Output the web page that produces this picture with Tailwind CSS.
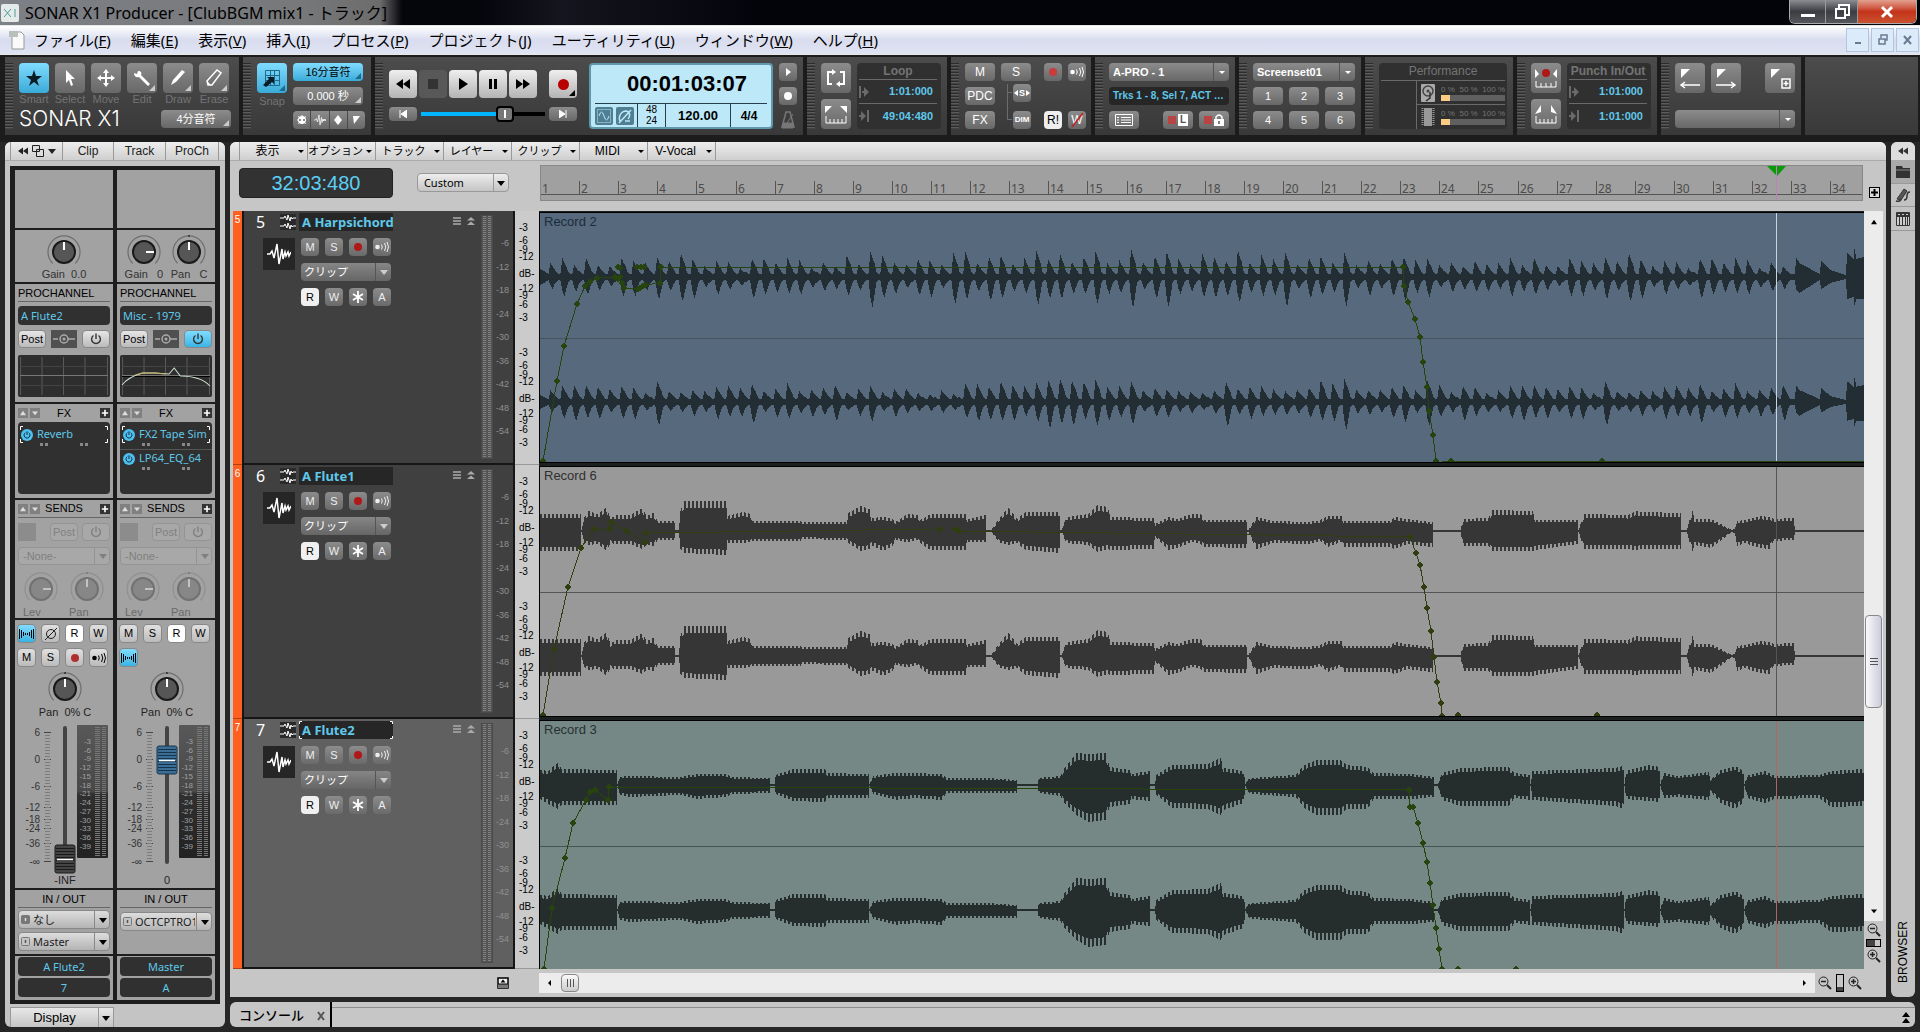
<!DOCTYPE html>
<html lang="ja">
<head>
    <meta charset="UTF-8">
    <meta name="viewport" content="width=device-width, initial-scale=1.0">
    <title>SONAR X1 Producer - [ClubBGM mix1 - トラック]</title>
    <script src="https://cdn.jsdelivr.net/npm/@tailwindcss/browser@4"></script>
</head>
<body class="min-h-screen flex flex-col bg-[#262626] text-black text-xs font-['Liberation_Sans','Noto_Sans_CJK_JP',sans-serif]">

    <!-- shared icons -->
    <svg class="hidden">
        <symbol id="i-down" viewBox="0 0 8 8"><path d="M0 2h8L4 7z" fill="currentColor"/></symbol>
        <symbol id="i-small" viewBox="0 0 8 8"><path d="M1 3h6L4 6z" fill="currentColor"/></symbol>
        <symbol id="i-up" viewBox="0 0 8 8"><path d="M0 7h8L4 1z" fill="currentColor"/></symbol>
        <symbol id="i-corner" viewBox="0 0 6 6"><path d="M6 0v6H0z" fill="currentColor"/></symbol>
        <symbol id="i-plus" viewBox="0 0 10 10"><path d="M4 1h2v3h3v2H6v3H4V6H1V4h3z" fill="currentColor"/></symbol>
        <symbol id="i-power" viewBox="0 0 12 12"><path d="M3.5 2.5a4.4 4.4 0 1 0 5 0M6 .5v5.5" fill="none" stroke="currentColor" stroke-width="1.4"/></symbol>
        <symbol id="i-echo" viewBox="0 0 16 12"><circle cx="3.5" cy="6" r="2.3" fill="currentColor"/><path d="M7.500 3.500q1.500 2.500 0 5M10.500 2q2.500 4 0 8M13 1q3 5 0 10" fill="none" stroke="currentColor"/></symbol>
        <symbol id="i-link" viewBox="0 0 15 10"><path d="M.500 0v10M2.500 1v8M4.500 3v4M6.500 4v2M8.500 4v2M10.500 3v4M12.500 1v8M14.500 0v10" stroke="currentColor" stroke-width="1" shape-rendering="crispEdges"/></symbol>
        <symbol id="i-wave" viewBox="0 0 24 22"><path d="M0 11h3l2-3 2 7 3-14 2 20 3-15 1 10 2-7 1 4 2-4 1 4 2-4" fill="none" stroke="currentColor" stroke-width="1.500"/></symbol>
        <symbol id="i-dbl" viewBox="0 0 16 16"><path d="M0 4h4l1-2 2 4 1-5 2 6 1-4 1 2 1-1h3M0 12h4l1-2 2 4 1-5 2 6 1-4 1 2 1-1h3" fill="none" stroke="currentColor"/></symbol>
        <symbol id="i-rew" viewBox="0 0 14 10"><path d="M7 0v10L0 5zM14 0v10L7 5z" fill="currentColor"/></symbol>
        <symbol id="i-ffw" viewBox="0 0 14 10"><path d="M0 0v10l7-5zM7 0v10l7-5z" fill="currentColor"/></symbol>
        <symbol id="i-from" viewBox="0 0 10 12"><path d="M1 0v12" stroke="currentColor" stroke-width="2"/><path d="M3 5h2V1l5 5-5 5V7H3z" fill="currentColor"/></symbol>
        <symbol id="i-to" viewBox="0 0 10 12"><path d="M9 0v12" stroke="currentColor" stroke-width="2"/><path d="M0 5h2V1l5 5-5 5V7H0z" fill="currentColor"/></symbol>
        <symbol id="i-range" viewBox="0 0 22 22"><path d="M0 3h7L0 10zM22 3h-7l7 7z" fill="currentColor"/><path d="M1 13v7h20v-7M5 16v4M9 16v4M13 16v4M17 16v4" fill="none" stroke="currentColor" stroke-width="1"/></symbol>
        <symbol id="i-zoomout" viewBox="0 0 14 14"><circle cx="5.500" cy="5.500" r="4.500" fill="none" stroke="currentColor"/><path d="M3 5.500h5" stroke="currentColor" stroke-width="1.500"/><path d="M9 9l4 4" stroke="currentColor" stroke-width="2"/></symbol>
        <symbol id="i-zoomin" viewBox="0 0 14 14"><circle cx="5.500" cy="5.500" r="4.500" fill="none" stroke="currentColor"/><path d="M3 5.500h5M5.500 3v5" stroke="currentColor" stroke-width="1.500"/><path d="M9 9l4 4" stroke="currentColor" stroke-width="2"/></symbol>
        <symbol id="i-metro" viewBox="0 0 16 18"><path d="M6 1h4l4 15H2z" fill="none" stroke="currentColor" stroke-width="1.500"/><path d="M3 12h10v5H2zM7 12l6-9" fill="currentColor" stroke="currentColor"/></symbol>
    </svg>

    <!-- title bar -->
    <header class="h-[25px] flex items-center bg-[linear-gradient(to_right,#7d8086,#77787a_300px,#6c6c6c_380px,#05050c_402px,#05050c_480px,#15151f_560px,#03030a_760px)]">
        <svg class="w-[18px] h-[18px] ml-px" viewBox="0 0 18 18"><rect width="18" height="18" rx="2" fill="#e4eaea"/><path d="M3 5l7 8M3 13l7-8M14 5v8" stroke="#4e9c94" fill="none"/></svg>
        <h1 class="ml-1.5 text-base leading-none font-['Noto_Sans','Noto_Sans_CJK_JP',sans-serif] whitespace-nowrap">SONAR X1 Producer - [ClubBGM mix1 - トラック]</h1>
        <div class="ml-auto mr-[3px] flex self-start h-6 border border-t-0 border-[#aaa] rounded-b-md overflow-hidden">
            <button class="w-9 flex items-center justify-center bg-linear-to-b from-[#8b8d92] via-[#3b3d42] to-[#55575c] border-r border-[#999]" aria-label="Minimize"><svg class="w-4 h-4" viewBox="0 0 16 16"><path d="M1 10h14v3H1z" fill="#fff"/></svg></button>
            <button class="w-8 flex items-center justify-center bg-linear-to-b from-[#8b8d92] via-[#3b3d42] to-[#55575c] border-r border-[#999]" aria-label="Restore"><svg class="w-4 h-4" viewBox="0 0 16 16"><path d="M5 4V1h10v10h-3M2 5h9v9H2z" fill="none" stroke="#fff" stroke-width="2"/></svg></button>
            <button class="w-[58px] flex items-center justify-center bg-linear-to-b from-[#e2a090] via-[#c4331a] to-[#c9502e]" aria-label="Close"><svg class="w-4 h-4" viewBox="0 0 16 16"><path d="M3 3l10 10M13 3L3 13" stroke="#fff" stroke-width="3"/></svg></button>
        </div>
    </header>

    <!-- menu bar -->
    <nav class="h-[30px] flex items-center gap-5 pl-[9px] pr-px border-y border-[#e8e8e8] bg-linear-to-b from-white via-[#d8dcee] to-[#dfe4f3] text-[15px] leading-5 font-['Noto_Sans','Noto_Sans_CJK_JP',sans-serif] whitespace-nowrap">
        <svg class="w-4 h-5 -mr-[11px]" viewBox="0 0 16 20"><path d="M3 2h9l3 3v14H3z" fill="#fafafa" stroke="#999"/><path d="M0 1h9v6H0z" fill="#b8c0bc"/></svg>
        <a href="#">ファイル(<u>F</u>)</a>
        <a href="#">編集(<u>E</u>)</a>
        <a href="#">表示(<u>V</u>)</a>
        <a href="#">挿入(<u>I</u>)</a>
        <a href="#">プロセス(<u>P</u>)</a>
        <a href="#">プロジェクト(<u>J</u>)</a>
        <a href="#">ユーティリティ(<u>U</u>)</a>
        <a href="#">ウィンドウ(<u>W</u>)</a>
        <a href="#">ヘルプ(<u>H</u>)</a>
        <div class="ml-auto flex gap-0.5 text-[#6a7a90]">
            <button class="w-[23px] h-6 bg-[#dcebfa] border border-[#b4c4dc] flex items-center justify-center" aria-label="Minimize document"><svg class="w-3 h-3" viewBox="0 0 12 12"><path d="M3 9h6" stroke="currentColor" stroke-width="2"/></svg></button>
            <button class="w-[23px] h-6 bg-[#dcebfa] border border-[#b4c4dc] flex items-center justify-center" aria-label="Restore document"><svg class="w-3 h-3" viewBox="0 0 12 12"><path d="M4 4V1h6v5H8M2 5h6v5H2z" fill="none" stroke="currentColor" stroke-width="1.500"/></svg></button>
            <button class="w-[23px] h-6 bg-[#dcebfa] border border-[#b4c4dc] flex items-center justify-center" aria-label="Close document"><svg class="w-3 h-3" viewBox="0 0 12 12"><path d="M2 2l7 8M9 2l-7 8" stroke="currentColor" stroke-width="2"/></svg></button>
        </div>
    </nav>

    <!-- control bar -->
    <section class="flex gap-1 pl-[5px] pr-0.5 pt-0.5 pb-[7px] bg-[#1c1c1c] text-white">
        <!-- tools -->
        <div class="w-[234px] h-[78px] flex gap-1.5 py-1.5 bg-linear-to-b from-[#4c4c4c] to-[#393939]">
            <div class="w-2 bg-[repeating-linear-gradient(#2c2c2c_0_1px,#5a5a5a_1px_2px,#444_2px_3px)]"></div>
            <div class="flex flex-col gap-1 grow">
                <div class="flex gap-1.5 text-[#747474] text-[11px] leading-[13px] text-center">
                    <div class="w-[30px] flex flex-col items-center"><button class="relative w-[30px] h-[30px] rounded-sm bg-linear-to-b from-[#7fdcff] to-[#38abd8] flex items-center justify-center" aria-label="Smart"><svg class="w-5 h-5" viewBox="0 0 20 20"><path d="M10 2l2 6h6l-5 4 2 6-5-4-5 4 2-6-5-4h6z" fill="#0c1c24"/></svg></button><span>Smart</span></div>
                    <div class="w-[30px] flex flex-col items-center"><button class="relative w-[30px] h-[30px] rounded-sm bg-linear-to-b from-[#8c8c8c] to-[#686868] flex items-center justify-center" aria-label="Select"><svg class="w-5 h-5" viewBox="0 0 20 20"><path d="M6 2v13l3-3 2 6 2-1-2-6h4z" fill="#fff"/></svg></button><span>Select</span></div>
                    <div class="w-[30px] flex flex-col items-center"><button class="relative w-[30px] h-[30px] rounded-sm bg-linear-to-b from-[#8c8c8c] to-[#686868] flex items-center justify-center" aria-label="Move"><svg class="w-5 h-5" viewBox="0 0 20 20"><path d="M10 1l3 4h-2v4h4V7l4 3-4 3v-2h-4v4h2l-3 4-3-4h2v-4H5v2l-4-3 4-3v2h4V5H7z" fill="#fff"/></svg></button><span>Move</span></div>
                    <div class="w-[30px] flex flex-col items-center"><button class="relative w-[30px] h-[30px] rounded-sm bg-linear-to-b from-[#8c8c8c] to-[#686868] flex items-center justify-center" aria-label="Edit"><svg class="w-5 h-5" viewBox="0 0 20 20"><path d="M2 5l3 1 1-3c3 0 4 2 3 4l9 9-2 2-9-9c-2 1-5 0-5-4z" fill="#fff"/></svg><svg class="absolute right-0.5 bottom-0.5 w-1.5 h-1.5 text-[#ccc]"><use href="#i-corner"/></svg></button><span>Edit</span></div>
                    <div class="w-[30px] flex flex-col items-center"><button class="relative w-[30px] h-[30px] rounded-sm bg-linear-to-b from-[#8c8c8c] to-[#686868] flex items-center justify-center" aria-label="Draw"><svg class="w-5 h-5" viewBox="0 0 20 20"><path d="M3 17l2-5L14 2l3 2L8 14z" fill="#fff"/></svg><svg class="absolute right-0.5 bottom-0.5 w-1.5 h-1.5 text-[#ccc]"><use href="#i-corner"/></svg></button><span>Draw</span></div>
                    <div class="w-[30px] flex flex-col items-center"><button class="relative w-[30px] h-[30px] rounded-sm bg-linear-to-b from-[#8c8c8c] to-[#686868] flex items-center justify-center" aria-label="Erase"><svg class="w-5 h-5" viewBox="0 0 20 20"><path d="M3 13L13 2l4 3L8 17H4z" fill="none" stroke="#fff" stroke-width="1.500"/><path d="M3 13l4 4H4z" fill="#fff"/></svg><svg class="absolute right-0.5 bottom-0.5 w-1.5 h-1.5 text-[#ccc]"><use href="#i-corner"/></svg></button><span>Erase</span></div>
                </div>
                <div class="flex items-center justify-between pr-2">
                    <b class="font-['Inter',sans-serif] font-light text-[21px] leading-[18px] whitespace-nowrap">SONAR X1</b>
                    <button class="relative w-[70px] h-[18px] rounded-sm bg-linear-to-b from-[#8c8c8c] to-[#686868] text-[11px] leading-none">4分音符<svg class="absolute right-0.5 bottom-0.5 w-1.5 h-1.5 text-[#ccc]"><use href="#i-corner"/></svg></button>
                </div>
            </div>
        </div>

        <!-- snap -->
        <div class="w-[128px] h-[78px] flex gap-1.5 py-1.5 bg-linear-to-b from-[#4c4c4c] to-[#393939]">
            <div class="w-2 bg-[repeating-linear-gradient(#2c2c2c_0_1px,#5a5a5a_1px_2px,#444_2px_3px)]"></div>
            <div class="w-[30px] text-[#747474] text-[11px] leading-4 text-center">
                <button class="relative w-[30px] h-[30px] rounded-sm bg-linear-to-b from-[#7fdcff] to-[#38abd8] flex items-center justify-center" aria-label="Snap"><svg class="w-5 h-5" viewBox="0 0 20 20"><path d="M3.500 2.500h14v15h-14zM3.500 7.500h14M3.500 12.500h14M8.500 2v16M12.500 2v16" fill="none" stroke="#1e6a88"/><path d="M1 17l6-6-2-2h7v7l-2-2-6 5z" fill="#0c1c24"/></svg><svg class="absolute right-0.5 bottom-0.5 w-1.5 h-1.5 text-[#1e6a88]"><use href="#i-corner"/></svg></button>
                <span>Snap</span>
            </div>
            <div class="flex flex-col justify-between w-[72px]">
                <button class="relative w-[70px] h-[18px] rounded-sm bg-linear-to-b from-[#7fdcff] to-[#38abd8] text-black text-[11px] leading-none">16分音符<svg class="absolute right-0.5 bottom-0.5 w-1.5 h-1.5 text-[#1e6a88]"><use href="#i-corner"/></svg></button>
                <button class="relative w-[70px] h-[18px] rounded-sm bg-linear-to-b from-[#8c8c8c] to-[#686868] text-[11px] leading-none">0.000 秒<svg class="absolute right-0.5 bottom-0.5 w-1.5 h-1.5 text-[#ccc]"><use href="#i-corner"/></svg></button>
                <div class="flex h-[18px] rounded-sm divide-x divide-[#4a4a4a] bg-linear-to-b from-[#8c8c8c] to-[#686868]">
                    <button class="flex-1 flex items-center justify-center" aria-label="MIDI events"><svg class="w-3 h-3" viewBox="0 0 12 12"><circle cx="6" cy="6" r="4" fill="#fff"/><path d="M6 1v10M1 6h10M2 2l8 8M10 2l-8 8" stroke="#fff" stroke-dasharray="1 1"/><circle cx="4" cy="6" r="1" fill="#666"/><circle cx="8" cy="6" r="1" fill="#666"/></svg></button>
                    <button class="flex-1 flex items-center justify-center" aria-label="Audio transients"><svg class="w-3 h-3"><use href="#i-wave"/></svg></button>
                    <button class="flex-1 flex items-center justify-center" aria-label="Nodes"><svg class="w-3 h-3" viewBox="0 0 12 12"><path d="M6 1l4 5-4 5-4-5z" fill="#fff"/></svg></button>
                    <button class="flex-1 flex items-center justify-center" aria-label="Markers"><svg class="w-3 h-3" viewBox="0 0 12 12"><path d="M3 2h7l-6 8z" fill="#fff"/></svg></button>
                </div>
            </div>
        </div>

        <!-- transport -->
        <div class="w-[428px] h-[78px] flex gap-1.5 py-1.5 bg-linear-to-b from-[#4c4c4c] to-[#393939]">
            <div class="w-2 bg-[repeating-linear-gradient(#2c2c2c_0_1px,#5a5a5a_1px_2px,#444_2px_3px)]"></div>
            <div class="w-[188px] pt-[7px] flex flex-col gap-2 text-black">
                <div class="flex gap-0.5">
                    <button class="w-7 h-7 rounded-sm bg-linear-to-b from-[#efefef] to-[#b4b4b4] flex items-center justify-center" aria-label="Rewind"><svg class="w-3.5 h-2.5"><use href="#i-rew"/></svg></button>
                    <button class="w-7 h-7 rounded-sm bg-[#585858] flex items-center justify-center" aria-label="Stop"><span class="w-2.5 h-2.5 bg-[#333]"></span></button>
                    <button class="w-7 h-7 rounded-sm bg-linear-to-b from-[#efefef] to-[#b4b4b4] flex items-center justify-center" aria-label="Play"><svg class="w-3 h-3" viewBox="0 0 12 12"><path d="M2 0l9 6-9 6z"/></svg></button>
                    <button class="w-7 h-7 rounded-sm bg-linear-to-b from-[#efefef] to-[#b4b4b4] flex items-center justify-center gap-0.5" aria-label="Pause"><span class="w-[3px] h-2.5 bg-black"></span><span class="w-[3px] h-2.5 bg-black"></span></button>
                    <button class="w-7 h-7 rounded-sm bg-linear-to-b from-[#efefef] to-[#b4b4b4] flex items-center justify-center" aria-label="Fast forward"><svg class="w-3.5 h-2.5"><use href="#i-ffw"/></svg></button>
                    <button class="relative ml-auto w-7 h-7 rounded-sm bg-linear-to-b from-[#efefef] to-[#b4b4b4] flex items-center justify-center" aria-label="Record"><span class="w-[11px] h-[11px] rounded-full bg-[#b80000]"></span><svg class="absolute right-0.5 bottom-0.5 w-1.5 h-1.5"><use href="#i-corner"/></svg></button>
                </div>
                <div class="flex items-center justify-between">
                    <button class="w-7 h-3.5 rounded-sm bg-linear-to-b from-[#8c8c8c] to-[#686868] text-white flex items-center justify-center" aria-label="Go to start"><svg class="w-2 h-2" viewBox="0 0 8 8"><path d="M1 0v8M8 0v8L2 4z" fill="#fff" stroke="#fff"/></svg></button>
                    <div class="relative w-[124px] h-4 flex items-center">
                        <span class="w-[75px] h-1 bg-[#00b4ff]"></span><span class="w-[18px] h-4 rounded-sm border-2 border-black bg-[#777] flex items-center justify-center"><span class="w-0.5 h-2 bg-white"></span></span><span class="grow h-1 bg-black"></span>
                        <input type="range" value="68" aria-label="Now time" class="absolute inset-0 w-full h-full opacity-0">
                    </div>
                    <button class="w-7 h-3.5 rounded-sm bg-linear-to-b from-[#8c8c8c] to-[#686868] text-white flex items-center justify-center" aria-label="Go to end"><svg class="w-2 h-2" viewBox="0 0 8 8"><path d="M7 0v8M0 0v8l6-4z" fill="#fff" stroke="#fff"/></svg></button>
                </div>
            </div>
            <div class="ml-1.5 w-[184px] h-[66px] rounded border-2 border-[#5f98ad] bg-[#bce8f8] text-black flex flex-col">
                <div class="grow flex items-center justify-center pl-3 text-[22px] font-bold leading-none">00:01:03:07</div>
                <div class="h-6 mx-1 flex items-stretch border-t border-[#25404c]">
                    <div class="w-[42px] flex items-center gap-[3px]">
                        <svg class="w-[18px] h-[18px]" viewBox="0 0 18 18"><rect width="18" height="18" rx="2" fill="#4f7f92"/><rect x="2.500" y="2.500" width="13" height="13" fill="none" stroke="#bce8f8" stroke-dasharray="1 1"/><path d="M4 9q2.500-8 5 0t5 0" fill="none" stroke="#bce8f8"/></svg>
                        <svg class="w-[18px] h-[18px]" viewBox="0 0 18 18"><rect width="18" height="18" rx="2" fill="#4f7f92"/><path d="M4 14c-2-4 1-10 6-10 5 1 4 6 2 8M3 16L15 3M9 14h5" fill="none" stroke="#bce8f8" stroke-width="1.500"/></svg>
                    </div>
                    <div class="w-[29px] border-x border-[#25404c] text-[10px] leading-[11px] text-center">48<br>24</div>
                    <div class="w-16 flex items-center justify-center font-bold text-[13px]">120.00</div>
                    <div class="grow border-l border-[#25404c] flex items-center justify-center font-bold text-xs">4/4</div>
                </div>
            </div>
            <div class="w-[18px] flex flex-col justify-between">
                <button class="w-[18px] h-[18px] rounded-sm bg-linear-to-b from-[#8c8c8c] to-[#686868] flex items-center justify-center" aria-label="Metronome on play"><svg class="w-2 h-2" viewBox="0 0 8 8"><path d="M2 0l5 4-5 4z" fill="#fff"/></svg></button>
                <button class="w-[18px] h-[18px] rounded-sm bg-linear-to-b from-[#8c8c8c] to-[#686868] flex items-center justify-center" aria-label="Metronome on record"><span class="w-2 h-2 rounded-full bg-white"></span></button>
                <svg class="w-[18px] h-[18px] text-[#777]"><use href="#i-metro"/></svg>
            </div>
        </div>

        <!-- loop -->
        <div class="w-[140px] h-[78px] flex gap-1.5 py-1.5 bg-linear-to-b from-[#4c4c4c] to-[#393939]">
            <div class="w-2 bg-[repeating-linear-gradient(#2c2c2c_0_1px,#5a5a5a_1px_2px,#444_2px_3px)]"></div>
            <div class="flex flex-col justify-between">
                <button class="w-[30px] h-[30px] rounded-sm bg-linear-to-b from-[#8c8c8c] to-[#686868] flex items-center justify-center" aria-label="Loop on/off"><svg class="w-5 h-5" viewBox="0 0 20 20"><path d="M7 4H2v12h4M13 16h5V4h-4" fill="none" stroke="#fff" stroke-width="2"/><path d="M6 1l4 3-4 3zM14 19l-4-3 4-3z" fill="#fff"/></svg></button>
                <button class="w-[30px] h-[30px] rounded-sm bg-linear-to-b from-[#8c8c8c] to-[#686868] flex items-center justify-center" aria-label="Set loop to selection"><svg class="w-[22px] h-[22px]"><use href="#i-range"/></svg></button>
            </div>
            <div class="w-[84px] rounded bg-[#303030] px-0.5 pr-1 divide-y divide-[#6a6a6a] text-[#5fc8ea] text-[11px] font-bold">
                <div class="h-[17px] text-[#747474] text-xs leading-[17px] text-center">Loop</div>
                <div class="h-6 flex items-center justify-between"><svg class="w-2.5 h-3 text-[#6a6a6a]"><use href="#i-from"/></svg><span class="pr-1">1:01:000</span></div>
                <div class="h-6 flex items-center justify-between"><svg class="w-2.5 h-3 text-[#6a6a6a]"><use href="#i-to"/></svg><span class="pr-1">49:04:480</span></div>
            </div>
        </div>

        <!-- mix -->
        <div class="w-[140px] h-[78px] flex gap-1.5 py-1.5 bg-linear-to-b from-[#4c4c4c] to-[#393939]">
            <div class="w-2 bg-[repeating-linear-gradient(#2c2c2c_0_1px,#5a5a5a_1px_2px,#444_2px_3px)]"></div>
            <div class="flex flex-col justify-between w-[30px]">
                <button class="h-[18px] rounded-sm bg-linear-to-b from-[#8c8c8c] to-[#686868] leading-none">M</button>
                <button class="h-[18px] rounded-sm bg-linear-to-b from-[#8c8c8c] to-[#686868] leading-none">PDC</button>
                <button class="h-[18px] rounded-sm bg-linear-to-b from-[#8c8c8c] to-[#686868] leading-none">FX</button>
            </div>
            <div class="grid grid-cols-[12px_18px] content-between w-[30px]">
                <button class="col-span-2 h-[18px] rounded-sm bg-linear-to-b from-[#8c8c8c] to-[#686868] leading-none">S</button>
                <svg class="row-span-2 w-3 h-[42px]" viewBox="0 0 12 42"><path d="M6.500 0v35.500H11M6.500 8.500H11" fill="none" stroke="#6c6c6c"/></svg>
                <button class="w-[18px] h-[18px] rounded-sm bg-linear-to-b from-[#8c8c8c] to-[#686868] text-[9px] font-bold leading-none flex items-center justify-center gap-px" aria-label="Exclusive solo"><svg class="w-1 h-1.5" viewBox="0 0 4 6"><path d="M4 0v6L0 3z" fill="#fff"/></svg>S<svg class="w-1 h-1.5" viewBox="0 0 4 6"><path d="M0 0v6l4-3z" fill="#fff"/></svg></button>
                <button class="mt-1.5 w-[18px] h-[18px] rounded-sm bg-linear-to-b from-[#8c8c8c] to-[#686868] text-[8px] font-bold leading-none flex items-center justify-center">DIM</button>
            </div>
            <div class="ml-[7px] grid grid-cols-2 content-between gap-x-[6px] w-[42px]">
                <button class="w-[18px] h-[18px] rounded-sm bg-linear-to-b from-[#8c8c8c] to-[#686868] flex items-center justify-center" aria-label="Record arm"><span class="w-2 h-2 rounded-full bg-[#c83c3c]"></span></button>
                <button class="w-[18px] h-[18px] rounded-sm bg-linear-to-b from-[#8c8c8c] to-[#686868] flex items-center justify-center" aria-label="Input echo"><svg class="w-4 h-3"><use href="#i-echo"/></svg></button>
                <button class="w-[18px] h-[18px] rounded-sm bg-[#eee] text-black leading-none">R!</button>
                <button class="w-[18px] h-[18px] rounded-sm bg-linear-to-b from-[#8c8c8c] to-[#686868] leading-none relative">W<svg class="absolute inset-0 w-full h-full" viewBox="0 0 18 18"><path d="M4 16L15 2" stroke="#c02020" stroke-width="1.500"/></svg></button>
            </div>
        </div>

        <!-- controller -->
        <div class="w-[140px] h-[78px] flex gap-1.5 py-1.5 bg-linear-to-b from-[#4c4c4c] to-[#393939]">
            <div class="w-2 bg-[repeating-linear-gradient(#2c2c2c_0_1px,#5a5a5a_1px_2px,#444_2px_3px)]"></div>
            <div class="w-[120px] flex flex-col justify-between">
                <div class="relative"><select aria-label="Controller" class="appearance-none block w-full h-[18px] pl-1 rounded-sm bg-linear-to-b from-[#8c8c8c] to-[#686868] text-[11px] font-bold leading-none"><option>A-PRO - 1</option></select><span class="absolute right-0 top-0 w-4 h-[18px] border-l border-[#555] flex items-center justify-center pointer-events-none"><svg class="w-2 h-2"><use href="#i-small"/></svg></span></div>
                <div class="h-[18px] rounded-sm bg-[#262626] pl-1 text-[#5fc8ea] text-[10px] font-bold leading-[18px] whitespace-nowrap overflow-hidden">Trks 1 - 8, Sel 7, ACT …</div>
                <div class="flex">
                    <button class="w-[30px] h-[18px] rounded-sm bg-linear-to-b from-[#8c8c8c] to-[#686868] flex items-center justify-center" aria-label="Open controller"><svg class="w-[18px] h-3" viewBox="0 0 18 12"><path d="M.500.500h17v11H.500z" fill="none" stroke="#fff"/><path d="M2 3.500h2M6 3.500h10M2 6h2M6 6h10M2 8.500h2M6 8.500h10" stroke="#fff"/></svg></button>
                    <button class="ml-auto w-[30px] h-[18px] rounded-sm bg-linear-to-b from-[#8c8c8c] to-[#686868] flex items-center justify-center gap-0.5" aria-label="Learn"><span class="w-2 h-2 bg-[#b84444]"></span><span class="w-2.5 h-3 bg-white text-[#555] font-bold text-[10px] leading-3">L</span></button>
                    <button class="ml-1.5 w-[30px] h-[18px] rounded-sm bg-linear-to-b from-[#8c8c8c] to-[#686868] flex items-center justify-center gap-0.5" aria-label="Lock"><span class="w-2 h-2 bg-[#b84444]"></span><svg class="w-2.5 h-3" viewBox="0 0 10 12"><path d="M2 6V3q3-4 6 0v3" fill="none" stroke="#fff" stroke-width="1.500"/><path d="M0 5h10v7H0z" fill="#fff"/><path d="M5 7v3" stroke="#555" stroke-width="1.500"/></svg></button>
                </div>
            </div>
        </div>

        <!-- screensets -->
        <div class="w-[122px] h-[78px] flex gap-1.5 py-1.5 bg-linear-to-b from-[#4c4c4c] to-[#393939]">
            <div class="w-2 bg-[repeating-linear-gradient(#2c2c2c_0_1px,#5a5a5a_1px_2px,#444_2px_3px)]"></div>
            <div class="w-[102px] grid grid-cols-3 content-between gap-x-1.5">
                <div class="relative col-span-3"><select aria-label="Screenset" class="appearance-none block w-full h-[18px] pl-1 rounded-sm bg-linear-to-b from-[#8c8c8c] to-[#686868] text-[11px] font-bold leading-none"><option>Screenset01</option></select><span class="absolute right-0 top-0 w-4 h-[18px] border-l border-[#555] flex items-center justify-center pointer-events-none"><svg class="w-2 h-2"><use href="#i-small"/></svg></span></div>
                <button class="h-[18px] rounded-sm bg-linear-to-b from-[#8c8c8c] to-[#686868] text-[11px] leading-none">1</button>
                <button class="h-[18px] rounded-sm bg-linear-to-b from-[#8c8c8c] to-[#686868] text-[11px] leading-none">2</button>
                <button class="h-[18px] rounded-sm bg-linear-to-b from-[#8c8c8c] to-[#686868] text-[11px] leading-none">3</button>
                <button class="h-[18px] rounded-sm bg-linear-to-b from-[#8c8c8c] to-[#686868] text-[11px] leading-none">4</button>
                <button class="h-[18px] rounded-sm bg-linear-to-b from-[#8c8c8c] to-[#686868] text-[11px] leading-none">5</button>
                <button class="h-[18px] rounded-sm bg-linear-to-b from-[#8c8c8c] to-[#686868] text-[11px] leading-none">6</button>
            </div>
        </div>

        <!-- performance -->
        <div class="w-[148px] h-[78px] flex gap-1.5 py-1.5 bg-linear-to-b from-[#4c4c4c] to-[#393939]">
            <div class="w-2 bg-[repeating-linear-gradient(#2c2c2c_0_1px,#5a5a5a_1px_2px,#444_2px_3px)]"></div>
            <div class="w-[128px] rounded bg-[#303030] px-0.5 text-[#747474]">
                <div class="h-[17px] text-xs leading-[17px] text-center">Performance</div>
                <div class="border-t border-[#6a6a6a] grid grid-cols-[36px_1fr]">
                    <div class="row-span-2 border-r border-[#6a6a6a]"></div>
                    <div class="h-6 pl-1 flex items-center gap-1.5 border-b border-[#6a6a6a]">
                        <svg class="w-3.5 h-[18px]" viewBox="0 0 14 18"><rect width="14" height="18" rx="1" fill="#aaa"/><circle cx="7" cy="7" r="5" fill="none" stroke="#444" stroke-width="1.500"/><circle cx="7" cy="7" r="1.500" fill="#444"/><path d="M9 8v6l-4 3" fill="none" stroke="#333" stroke-width="1.500"/></svg>
                        <div class="grow text-[8px] leading-[10px]"><div class="flex justify-between whitespace-nowrap"><span>0 %</span><span>50 %</span><span>100 %</span></div><div class="h-1.5 bg-[#606060]"><div class="w-[9px] h-1.5 bg-[#fccb85]"></div></div></div>
                    </div>
                    <div class="h-6 pl-1 flex items-center gap-1.5">
                        <svg class="w-3.5 h-[18px]" viewBox="0 0 14 18"><rect x="3" width="8" height="18" fill="#999"/><path d="M1.500 0v18M12.500 0v18" stroke="#999" stroke-width="2" stroke-dasharray="1 1"/></svg>
                        <div class="grow text-[8px] leading-[10px]"><div class="flex justify-between whitespace-nowrap"><span>0 %</span><span>50 %</span><span>100 %</span></div><div class="h-1.5 bg-[#606060]"><div class="w-[9px] h-1.5 bg-[#fccb85]"></div></div></div>
                    </div>
                </div>
            </div>
        </div>

        <!-- punch -->
        <div class="w-[140px] h-[78px] flex gap-1.5 py-1.5 bg-linear-to-b from-[#4c4c4c] to-[#393939]">
            <div class="w-2 bg-[repeating-linear-gradient(#2c2c2c_0_1px,#5a5a5a_1px_2px,#444_2px_3px)]"></div>
            <div class="flex flex-col justify-between">
                <button class="w-[30px] h-[30px] rounded-sm bg-linear-to-b from-[#8c8c8c] to-[#686868] flex items-center justify-center" aria-label="Punch on/off"><svg class="w-[22px] h-[22px]" viewBox="0 0 22 22"><path d="M0 2l4 5-4 4zM22 2l-4 5 4 4z" fill="#fff"/><circle cx="11" cy="6" r="4" fill="#b01818"/><path d="M1 14v6h20v-6M6 16v4M11 16v4M16 16v4" fill="none" stroke="#fff"/></svg></button>
                <button class="w-[30px] h-[30px] rounded-sm bg-linear-to-b from-[#8c8c8c] to-[#686868] flex items-center justify-center" aria-label="Set punch to selection"><svg class="w-[22px] h-[22px]" viewBox="0 0 22 22"><path d="M6 2v7L0 11zM16 2v7l6 2z" fill="#fff"/><path d="M1 13v7h20v-7M5 16v4M9 16v4M13 16v4M17 16v4" fill="none" stroke="#fff"/></svg></button>
            </div>
            <div class="w-[84px] rounded bg-[#303030] px-0.5 pr-1 divide-y divide-[#6a6a6a] text-[#5fc8ea] text-[11px] font-bold">
                <div class="h-[17px] text-[#747474] text-xs leading-[17px] text-center whitespace-nowrap">Punch In/Out</div>
                <div class="h-6 flex items-center justify-between"><svg class="w-2.5 h-3 text-[#6a6a6a]"><use href="#i-from"/></svg><span class="pr-1">1:01:000</span></div>
                <div class="h-6 flex items-center justify-between"><svg class="w-2.5 h-3 text-[#6a6a6a]"><use href="#i-to"/></svg><span class="pr-1">1:01:000</span></div>
            </div>
        </div>

        <!-- markers -->
        <div class="w-[140px] h-[78px] flex gap-1.5 py-1.5 bg-linear-to-b from-[#4c4c4c] to-[#393939]">
            <div class="w-2 bg-[repeating-linear-gradient(#2c2c2c_0_1px,#5a5a5a_1px_2px,#444_2px_3px)]"></div>
            <div class="w-[120px] flex flex-col gap-[17px]">
                <div class="flex gap-1.5">
                    <button class="w-[30px] h-[30px] rounded-sm bg-linear-to-b from-[#8c8c8c] to-[#686868] flex items-center justify-center" aria-label="Previous marker"><svg class="w-[22px] h-[22px]" viewBox="0 0 22 22"><path d="M2 2h9L2 11z" fill="#fff"/><path d="M3 18h18M6 15l-4 3 4 3" fill="none" stroke="#fff" stroke-width="1.500"/></svg></button>
                    <button class="w-[30px] h-[30px] rounded-sm bg-linear-to-b from-[#8c8c8c] to-[#686868] flex items-center justify-center" aria-label="Next marker"><svg class="w-[22px] h-[22px]" viewBox="0 0 22 22"><path d="M2 2h9L2 11z" fill="#fff"/><path d="M1 18h18M16 15l4 3-4 3" fill="none" stroke="#fff" stroke-width="1.500"/></svg></button>
                    <button class="ml-auto w-[30px] h-[30px] rounded-sm bg-linear-to-b from-[#8c8c8c] to-[#686868] flex items-center justify-center" aria-label="Insert marker"><svg class="w-[22px] h-[22px]" viewBox="0 0 22 22"><path d="M2 2h9L2 11z" fill="#fff"/><path d="M13 12h8v9h-8zM17 14v5M14.500 16.500h5" fill="none" stroke="#fff" stroke-width="1.500"/></svg></button>
                </div>
                <div class="relative"><select aria-label="Marker" class="appearance-none block w-full h-[18px] pl-1 rounded-sm bg-linear-to-b from-[#8c8c8c] to-[#686868] text-[11px] leading-none"><option></option></select><span class="absolute right-0 top-0 w-4 h-[18px] border-l border-[#555] flex items-center justify-center pointer-events-none"><svg class="w-2 h-2"><use href="#i-small"/></svg></span></div>
            </div>
        </div>
        <div class="grow h-[78px] bg-linear-to-b from-[#4c4c4c] to-[#393939]"></div>
    </section>

    <div class="grow flex gap-[5px] pl-[5px] pr-1 pb-[5px]">

        <!-- inspector -->
        <aside class="w-[220px] shrink-0 rounded-md bg-[#c4c4c4] overflow-hidden flex flex-col">
            <div class="h-[19px] px-[5px] flex bg-linear-to-b from-[#eee] to-[#cfcfcf] text-[#222] border-b border-[#aaa] divide-x divide-[#999]">
                <div class="w-[53px] border-l border-[#999] flex items-center justify-center gap-1">
                    <svg class="w-2.5 h-2"><use href="#i-rew"/></svg>
                    <svg class="w-3 h-3" viewBox="0 0 12 12"><path d="M.500.500h7v6h-7zM4.500 4.500h7v7h-7z" fill="#ddd" stroke="#222"/></svg>
                    <svg class="w-2 h-2"><use href="#i-down"/></svg>
                </div>
                <button class="w-[51px]">Clip</button>
                <button class="w-[52px]">Track</button>
                <button class="w-[53px]">ProCh</button>
                <span class="w-px"></span>
            </div>
            <div id="strips" class="mx-[5px] mt-[5px] px-[5px] pt-1 pb-1 bg-[#1e1e1e] grid grid-cols-2 gap-1"></div>
            <div class="mt-[3px] mx-[5px] w-[104px] h-5 flex items-center bg-linear-to-b from-[#e8e8e8] to-[#c4c4c4] border border-b-0 border-[#999]">
                <button class="grow text-[13px] leading-none">Display</button>
                <button class="w-[15px] h-full border-l border-[#999] flex items-center justify-center" aria-label="Display options"><svg class="w-2 h-2"><use href="#i-down"/></svg></button>
            </div>
        </aside>

        <div class="grow min-w-0 flex flex-col gap-[5px]">
            <div class="grow flex gap-[5px]">

                <!-- track view -->
                <main class="grow min-w-0 rounded-t-md bg-[#c6c6c6] overflow-hidden">
                    <div class="h-[19px] pl-[9px] flex bg-linear-to-b from-[#eee] to-[#cfcfcf] border-b border-[#aaa] whitespace-nowrap">
                        <button class="w-[68px] border-l border-[#999] flex items-center gap-0.5 pr-0.5"><span class="grow text-center">表示</span><svg class="w-2 h-2 shrink-0"><use href="#i-small"/></svg></button>
                        <button class="w-[68px] border-l border-[#999] flex items-center gap-0.5 pr-0.5 text-[11px]"><span class="grow text-center">オプション</span><svg class="w-2 h-2 shrink-0"><use href="#i-small"/></svg></button>
                        <button class="w-[68px] border-l border-[#999] flex items-center gap-0.5 pr-0.5 text-[11px]"><span class="grow text-center">トラック</span><svg class="w-2 h-2 shrink-0"><use href="#i-small"/></svg></button>
                        <button class="w-[68px] border-l border-[#999] flex items-center gap-0.5 pr-0.5 text-[11px]"><span class="grow text-center">レイヤー</span><svg class="w-2 h-2 shrink-0"><use href="#i-small"/></svg></button>
                        <button class="w-[68px] border-l border-[#999] flex items-center gap-0.5 pr-0.5 text-[11px]"><span class="grow text-center">クリップ</span><svg class="w-2 h-2 shrink-0"><use href="#i-small"/></svg></button>
                        <button class="w-[68px] border-l border-[#999] flex items-center gap-0.5 pr-0.5"><span class="grow text-center">MIDI</span><svg class="w-2 h-2 shrink-0"><use href="#i-small"/></svg></button>
                        <button class="w-[69px] border-x border-[#999] flex items-center gap-0.5 pr-0.5"><span class="grow text-center">V-Vocal</span><svg class="w-2 h-2 shrink-0"><use href="#i-small"/></svg></button>
                    </div>

                    <div class="h-[50px] flex items-start pl-[9px] pt-1">
                        <div class="mt-[3px] w-[154px] h-[30px] rounded-sm bg-[#323232] border border-[#222] text-[#5bcff5] text-xl leading-7 text-center">32:03:480</div>
                        <div class="relative mt-2 ml-6 w-[92px]"><select aria-label="Track controls" class="appearance-none block w-full h-[19px] pl-1.5 rounded-sm border border-[#999] bg-linear-to-b from-[#eee] to-[#c4c4c4] text-[11px] leading-none font-['Noto_Sans',sans-serif]"><option>Custom</option></select><span class="absolute right-0 top-0 w-4 h-[19px] border-l border-[#999] flex items-center justify-center pointer-events-none"><svg class="w-2 h-2"><use href="#i-down"/></svg></span></div>
                        <div class="relative grow ml-[31px] h-9 bg-[#a0a0a0] border border-[#888] text-[#555]">
                            <svg id="ruler" class="w-full h-full text-xs font-['Noto_Sans',sans-serif]" aria-label="Time ruler"></svg>
                        </div>
                        <div class="w-[23px] pt-[22px] flex justify-center"><svg class="w-[11px] h-[11px]" viewBox="0 0 11 11"><rect x=".500" y=".500" width="10" height="10" fill="#ddd" stroke="#000"/><path d="M5.500 2v7M2 5.500h7" stroke="#000" stroke-width="2"/></svg></div>
                    </div>

                    <div class="flex">
                        <div id="tracks" class="grow min-w-0"></div>
                        <div class="w-[22px] shrink-0 flex flex-col pr-[3px]">
                            <div class="grow bg-[#ececec] flex flex-col items-center">
                                <svg class="mt-2 w-1.5 h-1.5"><use href="#i-up"/></svg>
                                <div class="mt-[390px] w-[17px] h-[93px] rounded-sm border border-[#888] bg-linear-to-r from-[#fafafa] to-[#ccd] flex flex-col gap-0.5 items-center justify-center"><span class="w-2 h-px bg-[#555]"></span><span class="w-2 h-px bg-[#555]"></span><span class="w-2 h-px bg-[#555]"></span></div>
                                <svg class="mt-auto mb-[7px] w-1.5 h-1.5"><use href="#i-down"/></svg>
                            </div>
                            <div class="h-12 flex flex-col items-center gap-0.5 pt-0.5 text-[#222]">
                                <button class="h-3.5" aria-label="Zoom out tracks"><svg class="w-3.5 h-3.5"><use href="#i-zoomout"/></svg></button>
                                <span class="w-[15px] h-2 shrink-0 border border-black"><span class="block w-2 h-full bg-[#444]"></span></span>
                                <button class="h-3.5" aria-label="Zoom in tracks"><svg class="w-3.5 h-3.5"><use href="#i-zoomin"/></svg></button>
                            </div>
                        </div>
                    </div>

                    <div class="h-7 flex items-center">
                        <div class="w-[309px] shrink-0 flex justify-end pr-[30px]"><button aria-label="Show bus pane"><svg class="w-3 h-3" viewBox="0 0 12 12"><path d="M1 1h10v10H1z" fill="#eee" stroke="#000" stroke-width="1.500"/><path d="M1 7h10v4H1z" fill="#777"/><path d="M1 7h10" stroke="#000"/><path d="M3.500 5.500h5L6 2.500z"/></svg></button></div>
                        <div class="grow h-5 bg-[#ececec] flex items-center px-2">
                            <svg class="w-1.5 h-2" viewBox="0 0 6 8"><path d="M4 1v6L1 4z"/></svg>
                            <div class="ml-2 w-[18px] h-[18px] rounded-sm border border-[#888] bg-linear-to-b from-[#fafafa] to-[#ccc] flex gap-0.5 items-center justify-center"><span class="w-px h-2 bg-[#555]"></span><span class="w-px h-2 bg-[#555]"></span><span class="w-px h-2 bg-[#555]"></span></div>
                            <svg class="ml-auto w-1.5 h-2" viewBox="0 0 6 8"><path d="M2 1v6l3-3z"/></svg>
                        </div>
                        <div class="w-[71px] shrink-0 flex items-center gap-1 pl-[3px] text-[#222]">
                            <button aria-label="Zoom out"><svg class="w-3.5 h-3.5"><use href="#i-zoomout"/></svg></button>
                            <span class="w-2 h-[18px] border border-black flex items-end"><span class="w-full h-1 bg-[#444]"></span></span>
                            <button aria-label="Zoom in"><svg class="w-3.5 h-3.5"><use href="#i-zoomin"/></svg></button>
                        </div>
                    </div>
                </main>

                <!-- browser tab -->
                <aside class="w-6 mr-px shrink-0 rounded-md bg-[#c2c2c2] flex flex-col items-center text-[#333]">
                    <button class="w-full h-[18px] rounded-t-md bg-[#ddd] flex items-center justify-center" aria-label="Expand browser"><svg class="w-2.5 h-2"><use href="#i-rew"/></svg></button>
                    <button class="w-full h-6 bg-[#aaa] border-b border-[#999] flex items-center justify-center" aria-label="Media"><svg class="w-3.5 h-3" viewBox="0 0 14 12"><path d="M0 2V0h6l1 2h7v10H0z" fill="#333"/><path d="M0 4h14" stroke="#888"/></svg></button>
                    <button class="w-full h-[23px] border-b border-[#999] flex items-center justify-center" aria-label="Plug-ins"><svg class="w-4 h-4" viewBox="0 0 16 16"><path d="M2 12l7-10 3 2-6 9z" fill="#555" stroke="currentColor"/><path d="M1 14q3 1 5-1M9 13q3 0 3-4t3-4" fill="none" stroke="currentColor" stroke-width="1.500"/></svg></button>
                    <button class="w-full h-6 border-b border-[#999] flex items-center justify-center" aria-label="Synths"><svg class="w-3.5 h-3.5" viewBox="0 0 14 14"><rect width="14" height="14" rx="1" fill="#333"/><path d="M2 2.500h2M6 2.500h2M10 2.500h2" stroke="#ccc"/><path d="M1 5h12v8H1z" fill="#ccc"/><path d="M3.500 5v8M6.500 5v8M9.500 5v8M11.500 5v8" stroke="#333"/></svg></button>
                    <div class="mt-auto mb-[14px] [writing-mode:vertical-rl] rotate-180 text-xs leading-none text-black">BROWSER</div>
                </aside>
            </div>

            <!-- docked tabs -->
            <footer class="h-[25px] mr-px rounded-md bg-[#c6c6c6] flex items-end overflow-hidden">
                <div class="h-full pl-[9px] pt-0.5 pr-1 flex items-center gap-3 border-r-2 border-black">
                    <button class="text-[13px] font-medium">コンソール</button>
                    <button class="text-[#555]" aria-label="Close console tab"><svg class="w-2.5 h-2.5" viewBox="0 0 10 10"><path d="M2 1l6 8M8 1L2 9" stroke="currentColor" stroke-width="2"/></svg></button>
                </div>
                <div class="grow h-5 border-t border-[#8c8c8c] flex items-center justify-end pr-[5px]"><button aria-label="Expand dock"><svg class="w-2 h-3" viewBox="0 0 8 12"><path d="M0 5l4-5 4 5zM0 11l4-5 4 5z"/></svg></button></div>
            </footer>
        </div>
    </div>

<script>
    // ---------- ruler ----------
    const ruler = document.getElementById('ruler')
    ruler.setAttribute('viewBox', '0 0 1322 34')
    ruler.setAttribute('preserveAspectRatio', 'xMinYMin slice')
    let marks = '<path d="M0 28.5h1322" stroke="#555"/>'
    for (let i = 1; i <= 34; i++) {
        const x = Math.round((i - 1) * 39.1) - 1
        if (i > 1) marks += `<path d="M${x + 0.5} 15v13" stroke="#555"/>`
        marks += `<text x="${x + 2}" y="27" fill="#4c4c4c">${i}</text>`
    }
    marks += '<path d="M1226 0h19l-9 10z" fill="#0a9a0a"/><path d="M1235.5 0v34" stroke="#c080c0"/>'
    ruler.innerHTML = marks

    // ---------- envelopes: x, up, down ----------
    const flute1 = [[0,17,20],[40,17,20],[41,1,1],[43,12,10],[48,20,14],[57,17,13],[66,24,20],[70,12,12],[75,16,13],[90,16,13],[102,23,18],[106,15,14],[113,18,15],[117,10,9],[134,10,9],[135,1,1],[138,1,1],[140,20,18],[144,30,22],[186,30,24],[187,15,12],[202,19,12],[210,17,11],[212,10,10],[260,10,10],[261,9,8],[306,9,9],[308,18,12],[320,25,20],[329,22,18],[331,13,14],[343,14,20],[352,12,15],[355,9,9],[367,17,11],[377,16,9],[380,11,12],[390,17,19],[425,17,19],[427,12,11],[445,16,11],[446,1,1],[451,1,1],[459,13,12],[468,23,14],[477,12,12],[485,19,19],[519,19,22],[520,1,1],[521,1,1],[526,14,12],[548,17,14],[557,26,21],[567,24,18],[570,14,19],[613,13,18],[615,7,6],[628,14,19],[637,12,17],[651,17,11],[660,17,13],[664,11,16],[706,11,17],[707,1,1],[708,1,1],[716,14,18],[733,10,12],[769,9,13],[780,11,10],[787,15,16],[801,15,11],[803,10,16],[850,10,16],[854,14,18],[867,12,13],[892,9,16],[893,1,1],[920,1,1],[923,12,15],[948,13,15],[952,21,20],[992,20,20],[995,11,19],[1037,11,13],[1038,1,1],[1039,4,4],[1044,17,18],[1088,16,18],[1095,20,19],[1104,19,18],[1140,18,18],[1141,1,1],[1146,1,1],[1152,20,20],[1154,12,14],[1171,12,17],[1191,1,1],[1194,2,2],[1197,10,15],[1204,11,12],[1220,15,17],[1229,14,18],[1233,12,10],[1253,13,9],[1255,1,1],[1324,1,1]]
    const flute2 = [[0,15,14],[8,14,19],[18,23,24],[21,16,20],[76,15,20],[77,1,1],[79,8,10],[88,9,12],[139,8,10],[156,11,14],[185,11,12],[192,8,9],[229,7,8],[230,1,1],[234,1,1],[235,10,9],[253,16,16],[284,16,17],[287,12,13],[328,11,13],[329,1,1],[330,4,4],[333,9,9],[355,12,15],[374,12,13],[401,11,15],[406,7,8],[446,7,8],[476,5,8],[477,1,1],[497,1,1],[498,7,8],[520,9,11],[524,17,18],[536,32,30],[548,31,37],[565,32,35],[569,18,22],[590,15,19],[591,11,14],[609,14,16],[610,1,1],[614,1,1],[616,10,10],[632,20,23],[668,21,24],[680,27,30],[683,17,25],[703,14,18],[705,1,1],[706,4,4],[710,7,9],[755,10,12],[764,20,23],[776,25,30],[800,25,30],[806,20,24],[827,18,24],[833,12,14],[872,11,14],[893,8,12],[894,1,1],[897,1,1],[902,12,15],[920,17,21],[968,18,21],[974,12,13],[989,10,15],[990,1,1],[992,14,15],[1075,17,21],[1083,19,24],[1084,1,1],[1086,14,14],[1108,20,16],[1119,18,17],[1120,1,1],[1123,12,13],[1138,9,12],[1168,13,15],[1170,5,6],[1180,15,18],[1195,19,24],[1203,14,17],[1204,1,1],[1207,10,13],[1225,14,18],[1234,9,14],[1279,10,13],[1291,14,22],[1324,16,21]]

    // plucked notes: quick attack, short tail
    const plucks = (a) => {
        const h = [14,19,12,19,12,11,19,16,14,20,16,24,18,11,16,15,9,18,19,14,19,17,9,15,11,22,13,25,22,15,13,18,17,12,24,26,14,20,22,13,19,27,18,23,15,20,26,14,17,28,15,21,25,18,13,24,20,16,27,14,22,18,25,13,19,21,15,24,12,17,14,19,20,17,18,12,15,11,16,13]
        const pts = [[0, 8 * a, 8 * a]]
        let x = 10, i = 0
        while (x < 1245) {
            const v = h[(i * (a === 1 ? 1 : 3)) % h.length] * a
            const d = v * (0.85 + 0.35 * ((i * 7) % 5) / 4)
            pts.push([x - 2, 3, 3], [x, v, d * 0.7], [x + 2, v * 0.75, d], [x + 4, v * 0.55, d * 0.6], [x + 6, 5, 5], [x + 8, 3, 3])
            i++
            x += 11.85
        }
        pts.push([1254,3,3],[1256,19*a,13*a],[1259,14*a,16*a],[1279,3,3],[1281,16*a,12*a],[1290,7*a,6*a],[1305,2,2],[1307,24*a,22*a],[1313,18*a,20*a],[1314,28*a,28*a],[1316,18*a,22*a],[1324,20*a,22*a])
        return pts
    }

    function wavePath(pts, mid, comb) {
        let top = '', bottom = '', k = 0
        for (let x = 0; x <= 1324; x++) {
            while (k < pts.length - 2 && pts[k + 1][0] < x) k++
            const [x0, u0, d0] = pts[k], [x1, u1, d1] = pts[k + 1]
            const t = Math.min(1, Math.max(0, (x - x0) / (x1 - x0 || 1)))
            let u = u0 + (u1 - u0) * t, d = d0 + (d1 - d0) * t
            if (comb && u > 3) {
                const m = x % 4 < 2 ? 1 : 0.78
                u *= m
                d *= m
            }
            u = Math.round(Math.max(u, 1))
            d = Math.round(Math.max(d, 1))
            top += `V${mid - u}H${x + 1}`
            bottom = `V${mid + d}H${x}` + bottom
        }
        return 'M0 ' + mid + top + bottom + 'Z'
    }

    // ---------- tracks ----------
    const tracks = [
        { n: 5, name: 'A Harpsichord', clip: 'Record 2', bg: 'bg-[#56697d]', panel: 'bg-[#404040]', h: 'h-[254px]', wave: '#232d34', line: '#46525c', text: '#1c2c3c', head: '#c8d4e0', env: '#27440f',
          a: plucks(1), b: plucks(0.85), comb: false,
          pts: [[3,249],[17,169],[24,134],[37,92],[45,74],[50,70],[57,66],[75,65],[80,65],[84,76],[98,77],[105,73],[120,71],[121,55],[863,55],[864,74],[868,90],[875,107],[880,125],[883,150],[887,175],[889,199],[893,223],[896,249],[1324,250]],
          dots: [[78,55],[80,56],[97,55],[101,55],[104,55],[78,67],[82,71],[100,76],[103,74],[911,249],[1062,249]], skip: 24 },
        { n: 6, name: 'A Flute1', clip: 'Record 6', bg: 'bg-[#999999]', panel: 'bg-[#404040]', h: 'h-[254px]', wave: '#363636', line: '#555', text: '#303030', head: '#555', env: '#2f3d10',
          a: flute1, b: flute1, comb: true,
          pts: [[3,249],[14,183],[28,121],[41,82],[54,63],[70,63],[71,56],[87,65],[105,77],[106,67],[400,63],[415,63],[419,65],[870,71],[876,87],[880,99],[884,121],[887,142],[891,165],[894,191],[897,216],[901,237],[902,250],[1324,250]],
          dots: [[918,249],[1057,249]], skip: 23 },
        { n: 7, name: 'A Flute2', clip: 'Record 3', bg: 'bg-[#768886]', panel: 'bg-[#606060]', h: 'h-[250px]', wave: '#262d2d', line: '#465454', text: '#263232', head: '#b06464', env: '#27440f',
          a: flute2, b: flute2, comb: true,
          pts: [[4,249],[12,188],[25,138],[33,103],[46,80],[50,72],[55,70],[68,80],[69,67],[869,70],[870,87],[873,87],[878,103],[883,123],[887,142],[890,163],[893,185],[896,208],[899,229],[902,249]],
          dots: [[918,249],[976,249]], skip: 99, selected: true }
    ]
    const scale = [[16,'-3'],[29,'-6'],[38,'-9'],[45,'-12'],[62,'dB-'],[77,'-12'],[84,'-9'],[93,'-6'],[106,'-3']]
    const scaleText = [0, 125].map(o => scale.map(([y, s]) => `<text x="4" y="${y + o + 4}">${s}</text>`).join('')).join('')
    const meterText = [6,12,18,24,30,36,42,48,54].map((v, i) => `<text x="26" y="${Math.round(35 + i * 23.5)}" text-anchor="end">-${v}</text>`).join('')
    const btn = 'w-[18px] h-[18px] rounded-sm bg-linear-to-b from-[#8c8c8c] to-[#6a6a6a] text-[#eee] text-[11px] leading-none flex items-center justify-center'

    document.getElementById('tracks').innerHTML = tracks.map(t => `
        <section class="flex ${t.h} overflow-hidden">
            <div class="ml-[3px] w-[9px] shrink-0 bg-[#ff5f1f] border-b border-[#b04010] text-white text-[10px] leading-[18px] text-center">${t.n}</div>
            <div class="w-[273px] shrink-0 flex border-x-2 border-b-2 border-[#161616] ${t.panel} text-white">
                <div class="w-[52px] shrink-0 pl-3 pt-[3px]">
                    <div class="flex justify-between"><span class="text-base leading-4 font-['Noto_Sans',sans-serif]">${t.n}</span><svg class="w-4 h-4 bg-[#2a2a2a]"><use href="#i-dbl"/></svg></div>
                    <div class="mt-2 ml-[7px] w-8 h-8 bg-[#262626] flex items-center justify-center"><svg class="w-6 h-[22px]"><use href="#i-wave"/></svg></div>
                </div>
                <div class="ml-[3px] w-[94px] shrink-0 pt-0.5">
                    <div class="relative h-[18px] bg-[#262626] pl-[3px] text-[#5fc8ea] text-[13px] font-bold leading-[18px] font-['Noto_Sans',sans-serif] whitespace-nowrap overflow-hidden">${t.name}${t.selected ? '<svg class="absolute inset-0 w-full h-full" viewBox="0 0 94 18"><path d="M3 .5H.5V3M91 .5h2.500V3M3 17.500H.5V15M91 17.500h2.500V15" fill="none" stroke="#fff"/></svg>' : ''}</div>
                    <div class="mt-[7px] ml-0.5 grid grid-cols-4 gap-x-1.5 gap-y-[7px] w-[90px]">
                        <button class="${btn}">M</button><button class="${btn}">S</button>
                        <button class="${btn}" aria-label="Record arm"><span class="w-2 h-2 rounded-full bg-[#b01818]"></span></button>
                        <button class="${btn}" aria-label="Input echo"><svg class="w-4 h-3"><use href="#i-echo"/></svg></button>
                        <div class="col-span-4 relative"><select aria-label="Edit filter" class="appearance-none block w-full h-[18px] pl-[3px] rounded-sm bg-linear-to-b from-[#868686] to-[#666] text-[11px] leading-none"><option>クリップ</option></select><span class="absolute right-0 top-0 w-4 h-[18px] border-l border-[#555] flex items-center justify-center text-[#ccc] pointer-events-none"><svg class="w-2 h-2"><use href="#i-down"/></svg></span></div>
                        <button class="w-[18px] h-[18px] rounded-sm bg-[#f0f0f0] text-black text-[11px] leading-none">R</button>
                        <button class="${btn}">W</button>
                        <button class="${btn}" aria-label="Freeze"><svg class="w-3 h-3" viewBox="0 0 12 12"><path d="M6 0v12M1 3l10 6M11 3L1 9" stroke="#fff" stroke-width="1.800"/></svg></button>
                        <button class="${btn}">A</button>
                    </div>
                </div>
                <svg class="ml-auto mr-1.5 mt-1.5 w-[22px] h-2 shrink-0 text-[#aaa]" viewBox="0 0 22 8"><path d="M0 1h8M0 4h8M0 7h8" stroke="currentColor" stroke-width="1.500"/><path d="M14 3.500L18 0l4 3.500zM14 8l4-3.500L22 8z" fill="currentColor"/></svg>
                <div class="mt-1 mb-1 w-3 shrink-0 flex gap-0.5 px-px bg-[#555] border border-[#4a4a4a]"><span class="flex-1 bg-[repeating-linear-gradient(#808080_0_1px,#555_1px_2px)]"></span><span class="flex-1 bg-[repeating-linear-gradient(#808080_0_1px,#555_1px_2px)]"></span></div>
                <svg class="w-5 h-full shrink-0 text-[9px] overflow-hidden" viewBox="10 0 20 252" preserveAspectRatio="xMinYMin slice" fill="#909090">${meterText}</svg>
            </div>
            <svg class="w-6 shrink-0 h-full bg-[#cbcbcb] text-[10px] border-b border-[#999]">${scaleText}</svg>
            <div class="relative grow min-w-0 h-[254px] bg-[#1c2020] pt-px pb-0.5">
                <div class="h-full border-y border-l border-black ${t.bg}">
                    <svg class="block w-full h-full" viewBox="0 1 1324 249" preserveAspectRatio="none" shape-rendering="crispEdges">
                        <path d="M0 126.500h1324" stroke="${t.line}"/>
                        <path d="${wavePath(t.a, 65, t.comb)}${wavePath(t.b, 190, t.comb)}" fill="${t.wave}"/>
                        <path d="M1236.500 0v251" stroke="${t.head}"/>
                        <path d="M${t.pts.map(p => p.join(' ')).join('L')}" fill="none" stroke="${t.env}"/>
                        <g shape-rendering="auto">${t.pts.slice(0, t.skip).concat(t.dots).map(([x, y]) => `<path d="M${x} ${y - 3}l3 3-3 3-3-3z" fill="${t.env}" stroke="${t.env}"/>`).join('')}</g>
                    </svg>
                </div>
                <span class="absolute left-[5px] top-0.5 text-[13px] leading-[18px]" style="color:${t.text}">${t.clip}</span>
            </div>
        </section>`).join('')

    // ---------- channel strips ----------
    const knob = (deg, ring) => `<svg class="w-9 h-9" viewBox="0 0 36 36"><path d="M6.700 29.300A16 16 0 1 1 29.300 29.300" fill="none" stroke="#6e6e6e" stroke-width="1.200"/>${ring ? '<path d="M18 1v2" stroke="#444" stroke-width="2"/>' : ''}<circle cx="18" cy="18" r="11" fill="#565656" stroke="#1a1a1a" stroke-width="2"/><path d="M18 16V8" stroke="#fff" stroke-width="2" transform="rotate(${deg} 18 18)"/></svg>`
    const head = (title, line) => `<div class="h-[18px] flex items-center gap-0.5 ${line}">
            <button class="w-2.5 h-2.5 bg-[#808080] text-[#ddd] flex items-center justify-center" aria-label="Previous"><svg class="w-1.5 h-1.5"><use href="#i-up"/></svg></button>
            <button class="w-2.5 h-2.5 bg-[#808080] text-[#ddd] flex items-center justify-center" aria-label="Next"><svg class="w-1.5 h-1.5"><use href="#i-down"/></svg></button>
            <span class="grow pr-3 text-center text-[11px]">${title}</span>
            <button class="w-2.5 h-2.5 bg-[#333] text-white flex items-center justify-center" aria-label="Add"><svg class="w-2 h-2"><use href="#i-plus"/></svg></button>
        </div>`
    const lightBtn = 'h-[18px] rounded-sm border border-[#888] bg-linear-to-b from-[#e6e6e6] to-[#bbb] text-[11px] leading-none flex items-center justify-center'
    const sq = (s) => {
        const base = 'w-[19px] h-[19px] rounded-sm border border-[#888] text-[11px] leading-none flex items-center justify-center '
        if (s === 'link') return `<button class="${base} bg-linear-to-b from-[#7fdcff] to-[#38b4e4]" aria-label="Interleave"><svg class="w-[15px] h-2.5"><use href="#i-link"/></svg></button>`
        if (s === 'rec') return `<button class="${base} bg-linear-to-b from-[#e0e0e0] to-[#bbb]" aria-label="Record arm"><span class="w-2 h-2 rounded-full bg-[#b03030]"></span></button>`
        if (s === 'echo') return `<button class="${base} bg-linear-to-b from-[#e0e0e0] to-[#bbb]" aria-label="Input echo"><svg class="w-4 h-3"><use href="#i-echo"/></svg></button>`
        if (s === 'phase') return `<button class="${base} bg-linear-to-b from-[#e0e0e0] to-[#bbb]" aria-label="Phase"><svg class="w-3 h-3" viewBox="0 0 12 12"><circle cx="6" cy="6" r="4.500" fill="none" stroke="#222"/><path d="M0 12L12 0" stroke="#222"/></svg></button>`
        if (s === 'R') return `<button class="${base} bg-white">R</button>`
        return `<button class="${base} bg-linear-to-b from-[#e0e0e0] to-[#bbb]">${s}</button>`
    }
    const fx = (name, sel) => `<div class="relative h-[17px] mb-1.5 flex items-center gap-1 pl-[3px] text-[#5fc8ea] text-[11px] whitespace-nowrap overflow-hidden font-['Noto_Sans',sans-serif]">
            <button class="w-3 h-3 shrink-0 rounded-full bg-[#4cc0ee] text-[#123] flex items-center justify-center" aria-label="Bypass ${name}"><svg class="w-2 h-2"><use href="#i-power"/></svg></button>${name}
            ${sel ? '<svg class="absolute inset-0 w-full h-full" viewBox="0 0 90 17"><path d="M4 .5H1.500V4M86 .5h2.500V4M4 16.500H1.500V13M86 16.500h2.500V13" fill="none" stroke="#fff"/></svg>' : ''}
        </div>`
    const dots = '<div class="-mt-1.5 h-1.5 px-[22px] flex justify-between"><svg class="w-2 h-1" viewBox="0 0 8 4"><path d="M0 0h3v3H0zM5 0h3v3H5z" fill="#888"/></svg><svg class="w-2 h-1" viewBox="0 0 8 4"><path d="M0 0h3v3H0zM5 0h3v3H5z" fill="#888"/></svg></div>'
    const route = (icon, name) => `<div class="relative h-[19px]"><select aria-label="Routing ${name}" class="appearance-none block w-full h-[19px] pl-[14px] pr-4 rounded-sm border border-[#888] bg-linear-to-b from-[#ddd] to-[#b4b4b4] text-[11px] leading-none text-[#222] font-['Noto_Sans','Noto_Sans_CJK_JP',sans-serif]"><option>${name}</option></select>
            <svg class="absolute left-[3px] top-[5px] w-[9px] h-[9px] pointer-events-none" viewBox="0 0 9 9"><rect x=".5" y=".5" width="8" height="8" rx="1" fill="${icon === 'I' ? '#777' : '#c4c4c4'}" stroke="#777"/><path d="M4.500 3v3" stroke="${icon === 'I' ? '#ddd' : '#555'}" stroke-width="1.500"/></svg>
            <span class="absolute right-0 top-0 w-4 h-[19px] border-l border-[#888] flex items-center justify-center pointer-events-none"><svg class="w-2 h-2"><use href="#i-down"/></svg></span></div>`

    const faderMarks = [[7,'6'],[34,'0'],[61,'-6'],[82,'-12'],[94,'-18'],[103,'-24'],[118,'-36'],[136,'-∞']]
    const fader = (y, color, edge) => {
        let s = faderMarks.map(([v, l]) => `<text x="23" y="${v + 4}" text-anchor="end" font-size="10" fill="#333">${l}</text><path d="M27 ${v + 0.5}h7" stroke="#444"/>`).join('')
        for (let i = 10; i < 136; i += 3) s += `<path d="M28 ${i + 0.5}h5" stroke="#7c7c7c"/>`
        s += '<rect x="46" y="1" width="4" height="138" rx="2" fill="#444"/>'
        s += '<rect x="60" width="31" height="133" rx="1" fill="url(#meter)"/>'
        for (let i = 2; i < 131; i += 2) s += `<path d="M78 ${i + 0.5}h5M85 ${i + 0.5}h4" stroke="#777"/>`
        for (let i = 1; i <= 13; i++) s += `<text x="74" y="${Math.round(10 + i * 8.75)}" text-anchor="end" font-size="8" fill="#a0a0a0">-${i * 3}</text>`
        s += `<rect x="38" y="${y}" width="20" height="28" rx="2" fill="${color}" stroke="${edge}"/>`
        for (let i = 3; i < 27; i += 3) s += `<path d="M39 ${y + i + 0.5}h18" stroke="${edge}"/>`
        s += `<path d="M40 ${y + 14.5}h16" stroke="#fff" stroke-width="1.500"/>`
        return `<div class="relative h-[150px]"><svg class="w-[95px] h-[150px]" viewBox="0 0 95 150"><defs><linearGradient id="meter" x2="0" y2="1"><stop offset="0" stop-color="#585858"/><stop offset=".5" stop-color="#484848"/><stop offset=".52" stop-color="#303030"/><stop offset="1" stop-color="#222"/></linearGradient></defs>${s}</svg><input type="range" aria-label="Volume" class="absolute left-[38px] top-0 w-5 h-full opacity-0 [writing-mode:vertical-lr]"></div>`
    }
    const box = 'bg-[#303030] rounded-sm text-[#5fc8ea] text-[11px] leading-[19px] font-[\'Noto_Sans\',sans-serif] whitespace-nowrap overflow-hidden'

    const strips = [
        { name: 'A Flute2', num: '7', preset: 'A Flute2', on: 'bg-linear-to-b from-[#e6e6e6] to-[#bbb]',
          gain: `<div class="flex flex-col items-center">${knob(0)}<span>Gain&nbsp; 0.0</span></div>`,
          curve: '', fx: fx('Reverb', true) + dots,
          keys: ['link','phase','R','W','M','S','rec','echo'], fader: fader(120, '#444', '#1a1a1a'), val: '-INF',
          io: `<div class="flex flex-col gap-[3px] pt-0.5">${route('I','なし')}${route('O','Master')}</div>` },
        { name: 'Master', num: 'A', preset: 'Misc - 1979', on: 'bg-linear-to-b from-[#7fdcff] to-[#38b4e4]',
          gain: `<div class="flex flex-col items-center">${knob(90)}<span>Gain&nbsp;&nbsp; 0</span></div><div class="flex flex-col items-center">${knob(0, true)}<span>Pan&nbsp;&nbsp; C</span></div>`,
          curve: '<path d="M2 21.500h86" stroke="#000"/><path d="M2 30Q8 22 22 18h12l14 1 5-6 6 8q20 0 29 10" fill="none" stroke="#cfe0d0"/><path d="M15 20l7-2h12l10 1" fill="none" stroke="#c8b060"/>',
          fx: fx('FX2 Tape Sim', true) + dots + '<div class="h-px bg-[#555]"></div>' + fx('LP64_EQ_64') + dots,
          keys: ['M','S','R','W','link'], fader: fader(21, '#3a6e96', '#18344c'), val: '0',
          io: `<div class="pt-1">${route('O','OCTCPTRO1')}</div>` }
    ]

    document.getElementById('strips').innerHTML = strips.map(s => `
        <div class="flex flex-col gap-0.5 min-w-0 [&>div]:bg-[#a2a2a2]">
            <div class="h-[58px]"></div>
            <div class="h-[52px] pt-1 flex justify-evenly text-[11px] leading-[9px] text-[#333] whitespace-nowrap">${s.gain}</div>
            <div class="h-[118px] px-[3px]">
                <div class="h-[18px] border-b border-[#666] text-[11px] leading-[18px]">PROCHANNEL</div>
                <div class="mt-1 h-[19px] pl-[3px] ${box}">${s.preset}</div>
                <div class="mt-[5px] flex justify-between">
                    <button class="w-7 ${lightBtn}">Post</button>
                    <button class="w-[26px] h-[18px] bg-[#505050] flex items-center justify-center" aria-label="Pre/post routing"><svg class="w-[22px] h-3" viewBox="0 0 22 12"><circle cx="11" cy="6" r="4" fill="none" stroke="#aaa" stroke-width="1.500"/><circle cx="11" cy="6" r="1.500" fill="#aaa"/><path d="M0 6h5M15 6h7" stroke="#aaa" stroke-width="1.500"/></svg></button>
                    <button class="w-7 h-[18px] rounded-sm border border-[#888] ${s.on} flex items-center justify-center" aria-label="ProChannel on"><svg class="w-3 h-3 text-[#333]"><use href="#i-power"/></svg></button>
                </div>
                <svg class="mt-[7px] w-full h-[42px]" viewBox="0 0 90 42" preserveAspectRatio="none"><rect width="90" height="42" rx="2" fill="#2e2e2e"/><path d="M2.500 2v38M23.500 2v38M44.500 2v38M65.500 2v38M87.500 2v38" stroke="#5a5a5a"/><path d="M2 11.500h86M2 30.500h86" stroke="#444"/><path d="M2 20.500h86" stroke="#777"/>${s.curve}</svg>
            </div>
            <div class="h-[94px] px-[3px]">
                ${head('FX', '')}
                <div class="h-[72px] pt-1 rounded-sm bg-[#303030]">${s.fx}</div>
            </div>
            <div class="h-[118px] px-[3px] text-[11px] leading-none text-[#808080]">
                <div class="text-black">${head('SENDS', 'border-b border-[#666]')}</div>
                <div class="mt-[5px] flex gap-1">
                    <span class="w-[18px] h-[18px] bg-[#8c8c8c]"></span>
                    <button disabled class="ml-auto w-7 h-[18px] rounded-sm border border-[#949494] bg-[#a8a8a8] leading-none">Post</button>
                    <button disabled class="w-7 h-[18px] rounded-sm border border-[#949494] bg-[#a8a8a8] flex items-center justify-center" aria-label="Send on"><svg class="w-3 h-3"><use href="#i-power"/></svg></button>
                </div>
                <div class="relative mt-1.5"><select disabled aria-label="Send" class="appearance-none block w-full h-[18px] pl-1 rounded-sm border border-[#949494] bg-[#a8a8a8] leading-none"><option>-None-</option></select><span class="absolute right-0 top-0 w-4 h-[18px] border-l border-[#949494] flex items-center justify-center pointer-events-none"><svg class="w-2 h-2"><use href="#i-down"/></svg></span></div>
                <div class="mt-1.5 flex justify-around opacity-35 text-black"><div>${knob(90)}<div>Lev</div></div><div>${knob(0, true)}<div>Pan</div></div></div>
            </div>
            <div class="h-[268px] pl-0.5 pt-1">
                <div class="h-[43px] grid grid-cols-4 gap-y-[5px] content-start w-[96px]">${s.keys.map(sq).join('')}</div>
                <div class="mt-1 flex flex-col items-center text-[11px] leading-[10px] text-[#222]">${knob(0, true)}<span>Pan&nbsp; 0% C</span></div>
                <div class="mt-2">${s.fader}</div>
                <div class="text-center text-[11px] leading-[10px] text-[#222]">${s.val}</div>
            </div>
            <div class="h-[64px] px-[3px]">
                <div class="h-[18px] border-b border-[#666] text-[11px] leading-[18px] text-center">IN / OUT</div>
                ${s.io}
            </div>
            <div class="h-[44px] px-[3px] pt-px flex flex-col gap-0.5 text-center">
                <div class="h-[19px] ${box}">${s.name}</div>
                <div class="h-[19px] ${box}">${s.num}</div>
            </div>
        </div>`).join('')
</script>
</body>
</html>
